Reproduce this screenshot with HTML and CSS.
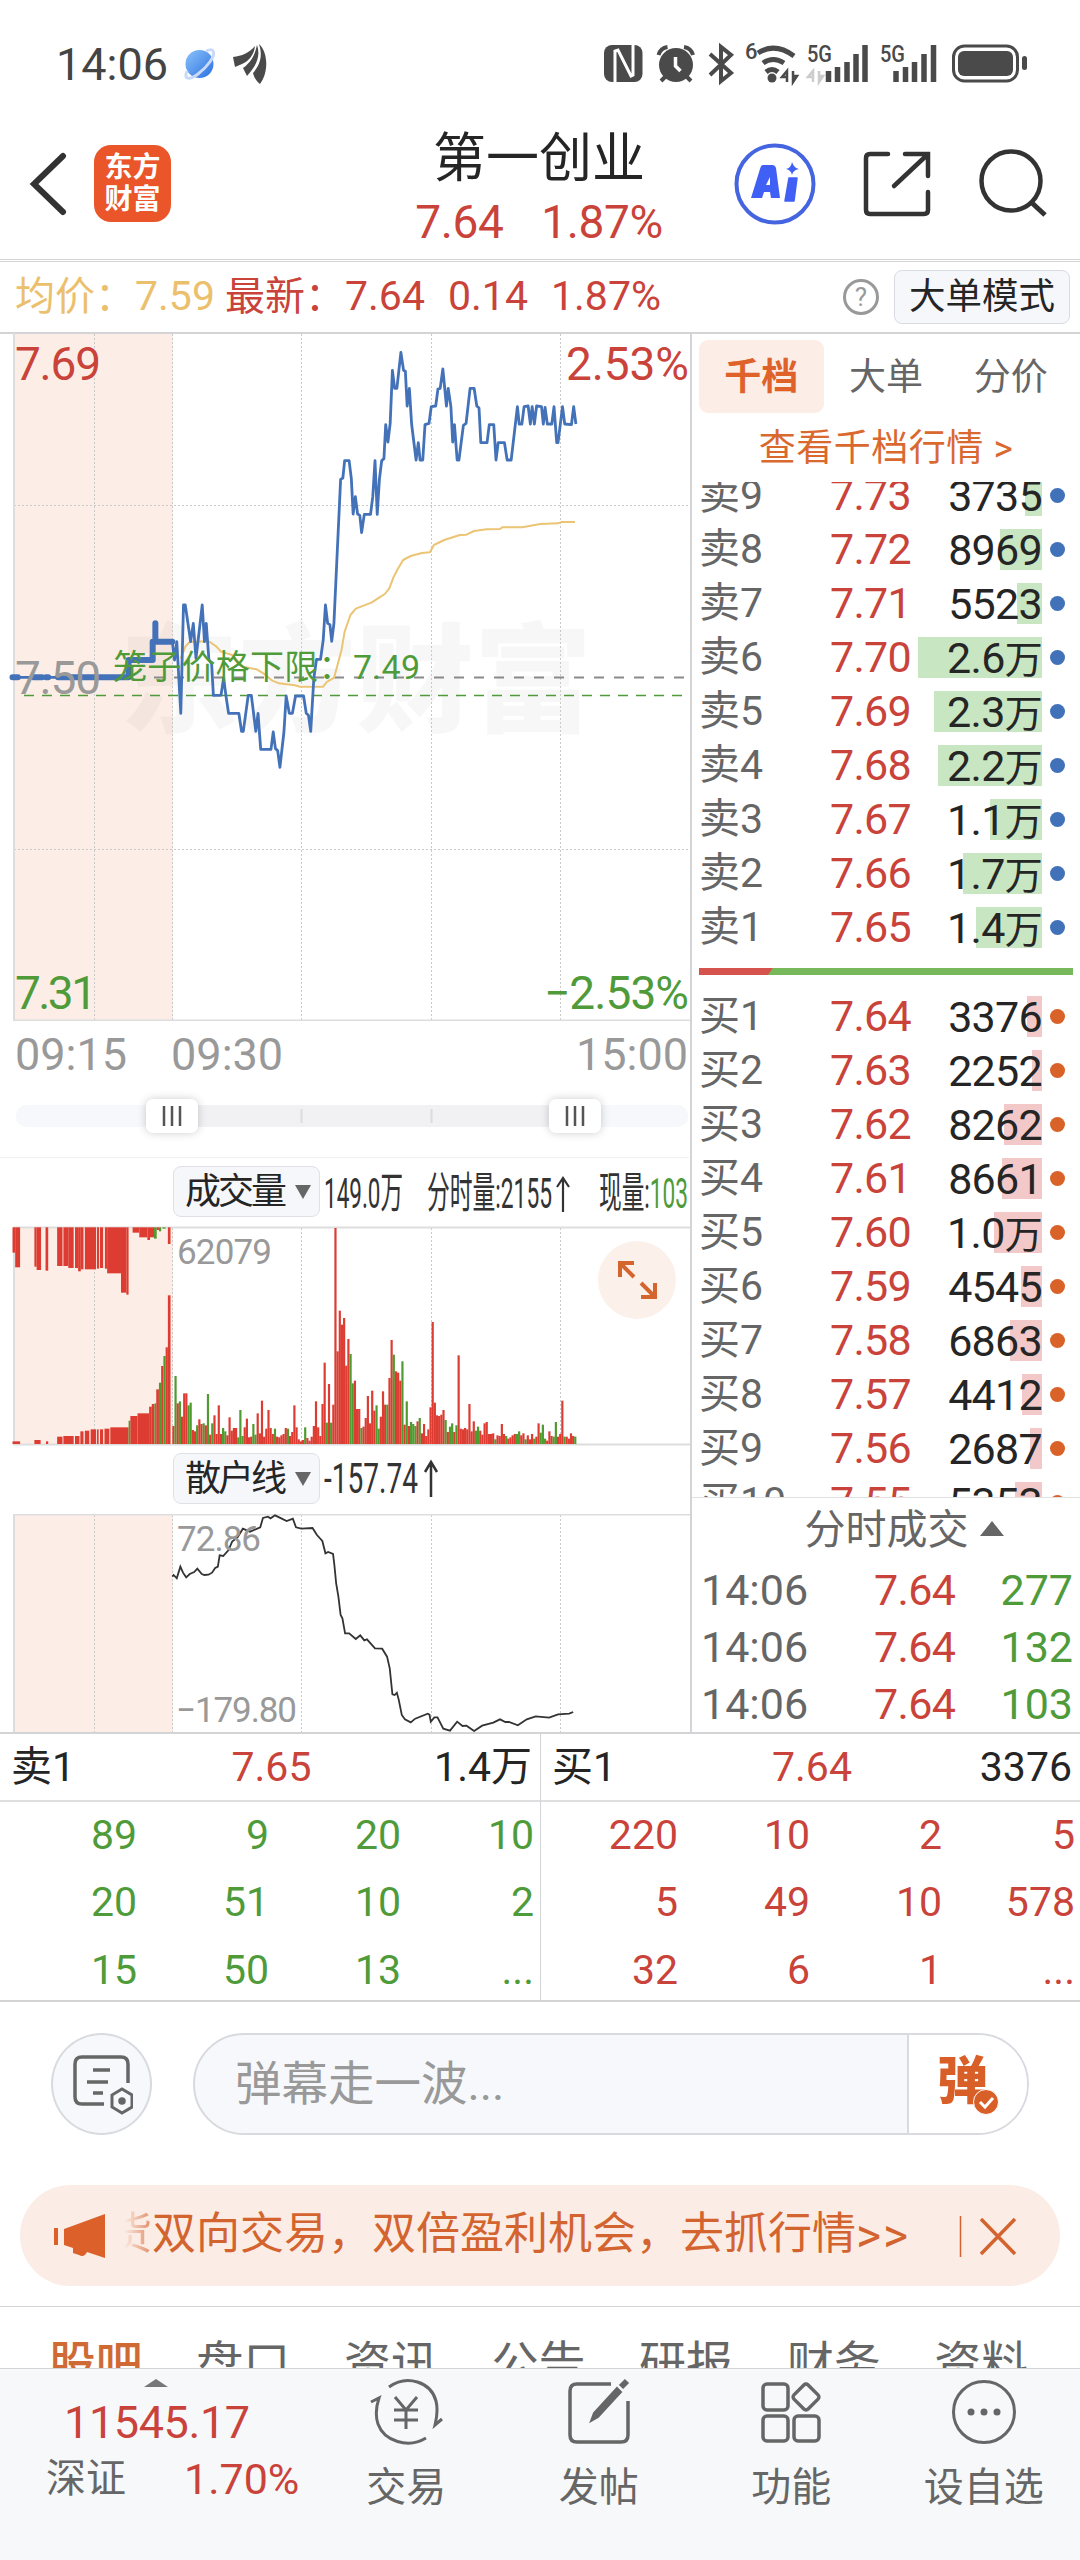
FILE: index.html
```html
<!DOCTYPE html>
<html lang="zh-CN">
<head>
    <meta charset="UTF-8">
    <meta name="viewport" content="width=device-width, initial-scale=1.0">
    <title>第一创业</title>
    <link rel="stylesheet" href="styles.css">
</head>
<body>
    <!-- status bar -->
    <div class="status">
        <span class="clock">14:06</span>
        <svg class="status-left" width="90" height="48" viewBox="180 40 90 48">
            <defs><linearGradient id="planet" x1="0" y1="0" x2="1" y2="1"><stop offset="0" stop-color="#8cc4fb"/><stop offset="1" stop-color="#2a6fe0"/></linearGradient></defs>
            <circle cx="199.500" cy="64" r="14" fill="url(#planet)"/>
            <path d="M187 71c-4 9 3 9 11 3 9-7 18-18 15-23-1-2-5-1-7 0" fill="none" stroke="#c9daf8" stroke-width="3"/>
            <path d="M259 44c9 8 10 28 1 40-4-3-6-7-7-11 7-8 10-17 6-29z" fill="#4a4a4a"/>
            <path d="M257 45c4 12-1 21-10 31l-4-8c8-6 12-13 14-23z" fill="#4a4a4a"/>
            <path d="M255 46c-1 9-6 15-13 18l-7 3-2-10c9-1 16-4 22-11z" fill="#4a4a4a"/>
        </svg>
        <svg class="status-right" width="430" height="48" viewBox="600 40 430 48">
            <rect x="604" y="45" width="38.500" height="37" rx="8" fill="#4a4a4a"/>
            <path d="M615 83V51l3-1 13 26 2-1V44" fill="none" stroke="#fff" stroke-width="3"/>
            <circle cx="676" cy="65" r="17" fill="#4a4a4a"/>
            <path d="M675.500 57v9l5 5" fill="none" stroke="#fff" stroke-width="3.500"/>
            <path d="M658.500 55q2-7 9-8M693 55q-2-7-9-8M665 77l-4 4M687 77l4 4" fill="none" stroke="#4a4a4a" stroke-width="4"/>
            <path d="M710 54l21 19-10 8V47l10 8-21 20" fill="none" stroke="#4a4a4a" stroke-width="4"/>
            <text x="745" y="59" font-size="22" textLength="11" class="st">6</text>
            <path d="M758 53q17-11 36 3M763 63q10-7 21 0M766 72q6-5 12 0" fill="none" stroke="#4a4a4a" stroke-width="5"/>
            <circle cx="772" cy="78" r="4.500" fill="#4a4a4a"/>
            <path d="M787 82V71l-5 6h5M793 71v11l4-6h-4" fill="none" stroke="#4a4a4a" stroke-width="2.500"/>
            <text x="807" y="62" font-size="23" textLength="25" lengthAdjust="spacingAndGlyphs" class="st">5G</text>
            <path d="M813 82V71l-5 6h5M819 71v11l4-6h-4" fill="none" stroke="#ccc" stroke-width="2.500"/>
            <path d="M828.500 71v11M837.500 67v15M847 62v20M856 54v28M865 45v37" stroke="#4a4a4a" stroke-width="5.500"/>
            <text x="880" y="62" font-size="23" textLength="25" lengthAdjust="spacingAndGlyphs" class="st">5G</text>
            <path d="M896 71v11M905.500 67v15M914.500 62v20M924 54v28M933.500 45v37" stroke="#4a4a4a" stroke-width="5.500"/>
            <rect x="953.500" y="46" width="64" height="35" rx="11" fill="none" stroke="#4a4a4a" stroke-width="3"/>
            <rect x="958" y="51" width="55" height="25" rx="6" fill="#4a4a4a"/>
            <rect x="1022" y="56" width="5" height="14" rx="2.500" fill="#4a4a4a"/>
        </svg>
    </div>

    <!-- header -->
    <div class="header">
        <svg class="back" width="40" height="64" viewBox="28 152 40 64"><path d="M63 156L34 184l29 28" fill="none" stroke="#333" stroke-width="6" stroke-linecap="round"/></svg>
        <div class="logo">东方<br>财富</div>
        <div class="title">
            <div class="name">第一创业</div>
            <div class="quote"><span>7.64</span><span>1.87%</span></div>
        </div>
        <svg class="tools" width="320" height="90" viewBox="730 139 320 90">
            <circle cx="775" cy="184" r="38.500" fill="none" stroke="#4565e0" stroke-width="4"/>
            <path d="M762 165h10q3 0 4 3l4 30h-9l-1-6h-6l-2 6h-11l9-29q1-4 3-4z" fill="#4060f5"/>
            <path d="M770 177v8h-4z" fill="#fff"/>
            <path d="M789 178h8l-3 23h-9z" fill="#4060f5" stroke="#4060f5" stroke-width="1.500" stroke-linejoin="round"/>
            <path d="M792 162q2 6 7 7-6 1-7 6-1-5-6-6 5-1 6-7z" fill="#4060f5"/>
            <path d="M888 154h-18q-4 0-4 4v52q0 4 4 4h54q4 0 4-4v-18M905 154h23v22M926 156l-32 30" fill="none" stroke="#333" stroke-width="4.500" stroke-linecap="round"/>
            <circle cx="1011" cy="181" r="29.500" fill="none" stroke="#333" stroke-width="4.500"/>
            <path d="M1031 202l14 13" stroke="#333" stroke-width="5"/>
        </svg>
    </div>

    <!-- quote line -->
    <div class="info">
        <span class="avg">均价：</span><span class="avg n1">7.59</span>
        <span class="n2">最新：</span><span class="n3">7.64</span><span class="n4">0.14</span><span class="n5">1.87%</span>
        <span class="help">?</span>
        <span class="mode">大单模式</span>
    </div>

    <div class="main">
        <div class="charts">
            <svg width="691" height="689" viewBox="0 332 691 689">
                <rect x="14" y="334" width="159" height="687" fill="#fceee6"/>
                <text x="120" y="723" font-size="118" textLength="472" class="mark">东方财富</text>
                <path class="grid" d="M94.5 334v687M172.5 334v687M301.500 334v687M431.500 334v687M560.500 334v687M14 505.500h676M14 849.500h676"/>
                <path class="axis" d="M14 333v687.500h676"/>
                <path d="M154 677.500h534" stroke="#8a8a8a" stroke-width="2" stroke-dasharray="10 10"/>
                <path d="M24 695.500h660" stroke="#4f9b3a" stroke-width="1.500" stroke-dasharray="10 8"/>
                <g transform="translate(0 330) scale(.44643 .33333)" fill="none" stroke-linejoin="round">
                    <path class="yellow" d="M405 985L415 950 425 936 460 934 470 936 485 950 495 965 520 975 545 1010 575 1018 590 1030 610 1052 625 1060 660 1066 672 1070 724 1070 732 1056 748 1044 755 1010 765 960 772 905 785 855 797 836 832 818 850 802 862 792 872 775 882 740 892 715 903 690 920 678 945 669 963 667 972 645 995 630 1030 615 1045 614 1062 603 1090 598 1120 597 1125 592 1170 592 1210 582 1250 580 1258 576 1288 576"/>
                    <path class="blue pre" d="M28 1042H40M74 1042H94M103 1042H108M130 1042H288V990H342V935H386M348 880V935"/>
                    <path class="blue" d="M28 1042H288M386 935L391 990 396 935 405 1150 411 825 415 825 427 935 433 880 439 985 453 825 458 935 462 880 468 990 474 1000 478 1096 495 1096 501 1044 506 1096 512 1150 535 1150 541 1204 545 1204 556 1096 563 1096 573 1204 578 1150 584 1258 607 1258 612 1206 617 1256 622 1262 627 1312 636 1206 641 1098 648 1150 655 1150 662 1098 680 1098 686 1150 691 1156 696 1204 703 1044 709 988 718 988 724 930 729 825 734 880 739 884 743 934 748 880 763 448 768 444 772 392 782 392 787 446 791 552 796 500 801 552 806 556 810 608 816 553 830 553 835 500 840 392 845 553 850 446 855 392 860 386 864 284 869 336 874 280 879 121 884 175 889 175 898 67 904 121 908 123 912 228 917 175 922 282 932 390 937 338 941 390 947 390 952 284 961 280 966 230 976 228 981 177 986 175 992 117 1000 228 1004 175 1010 230 1014 336 1018 284 1024 390 1028 390 1038 286 1044 280 1053 175 1062 175 1068 228 1073 234 1077 338 1091 338 1096 284 1106 284 1111 390 1116 338 1130 338 1136 390 1145 390 1159 230 1163 282 1169 282 1174 230 1183 228 1188 282 1192 230 1197 282 1202 228 1213 230 1217 282 1221 232 1226 282 1236 282 1241 230 1247 338 1250 338 1255 284 1260 230 1265 282 1280 284 1285 230 1290 282"/>
                </g>
                <g font-size="46">
                    <text x="15" y="380" class="red" textLength="86">7.69</text>
                    <text x="566" y="380" class="red" textLength="123">2.53%</text>
                    <text x="15" y="694" class="gray" textLength="86">7.50</text>
                    <text x="15" y="1009" class="green" textLength="82">7.31</text>
                    <text x="544" y="1009" class="green" textLength="145">−2.53%</text>
                </g>
                <text x="113" y="679" class="green" font-size="34" textLength="307">笼子价格下限：7.49</text>
            </svg>
            <div class="times"><span>09:15</span><span>09:30</span><span>15:00</span></div>
            <div class="slider">
                <svg width="691" height="56" viewBox="0 1088 691 56">
                    <rect x="16" y="1105" width="672" height="22" rx="10" fill="#f7f8fb"/>
                    <rect x="172" y="1105" width="403" height="22" fill="#f1f1f4"/>
                    <path d="M301.500 1109v14M431.500 1109v14" stroke="#dcdcde" stroke-width="2"/>
                    <g class="knob">
                        <rect x="146" y="1099" width="52" height="34" rx="7"/><rect x="549" y="1099" width="52" height="34" rx="7"/>
                    </g>
                    <path d="M164 1106v20M172 1106v20M180 1106v20M567 1106v20M575 1106v20M583 1106v20" stroke="#555" stroke-width="2.500"/>
                </svg>
            </div>
            <div class="indicator">
                <span class="pick">成交量<i></i></span>
                <svg width="368" height="52" viewBox="323 1166 368 52" font-size="43" fill="#333">
                    <text x="325" y="1208" textLength="79" lengthAdjust="spacingAndGlyphs">149.0万</text>
                    <text x="428" y="1208" textLength="125" lengthAdjust="spacingAndGlyphs">分时量:2155</text>
                    <path d="M564 1178v34M558 1187l6-9 6 9" fill="none" stroke="#333" stroke-width="2.200"/>
                    <text x="600" y="1208" textLength="89" lengthAdjust="spacingAndGlyphs">现量:<tspan class="green">103</tspan></text>
                </svg>
            </div>
            <svg width="691" height="220" viewBox="0 1226 691 220">
                <rect x="14" y="1227" width="159" height="217" fill="#fceee6"/>
                <path class="grid" d="M94.500 1228v216M172.500 1228v216M301.500 1228v216M431.500 1228v216M560.500 1228v216"/>
                <path class="axis" d="M690 1227.500H14V1444.500H690"/>
                <g id="volume" transform="translate(0 1150) scale(.44643 .33333)"></g>
                <text x="177" y="1264" class="gray" font-size="35" textLength="95">62079</text>
                <circle cx="637" cy="1280" r="39" fill="#fbf1ea"/>
                <path d="M620 1277v-14h14M621 1264l13 13M655 1283v14h-14M654 1296l-13-13" fill="none" stroke="#d5652f" stroke-width="4"/>
            </svg>
            <div class="indicator second">
                <span class="pick">散户线<i></i></span>
                <svg width="368" height="52" viewBox="323 1453 368 52" font-size="43" fill="#333">
                    <text x="325" y="1493" textLength="94" lengthAdjust="spacingAndGlyphs">-157.74</text>
                    <path d="M432 1462v35M426 1472l6-10 6 10" fill="none" stroke="#333" stroke-width="2.500"/>
                </svg>
            </div>
            <svg width="691" height="218" viewBox="0 1514 691 218">
                <rect x="14" y="1514" width="159" height="218" fill="#fceee6"/>
                <path class="grid" d="M94.500 1515v217M172.500 1515v217M301.500 1515v217M431.500 1515v217M560.500 1515v217"/>
                <path class="axis" d="M690 1514.500H14V1732"/>
                <path transform="translate(0 1440) scale(.44643 .33333)" class="retail" d="M386 410L389 405 396 415 404 380 410 398 417 412 425 402 435 396 442 386 452 402 458 405 467 404 475 398 482 384 488 380 492 346 500 348 512 330 520 305 532 292 544 266 560 275 583 262 589 234 600 230 606 235 616 226 630 235 642 243 652 238 656 236 663 262 675 266 700 264 710 285 722 303 729 340 735 336 746 342 749 375 753 430 758 470 763 525 767 535 773 580 782 580 797 597 807 586 816 601 822 598 840 625 856 626 867 650 873 685 879 763 884 765 889 758 893 778 900 825 907 838 920 847 930 836 958 821 962 824 965 845 973 832 980 832 993 866 1008 872 1024 845 1036 858 1045 857 1062 873 1080 857 1105 848 1120 838 1132 846 1140 846 1160 856 1180 838 1200 829 1230 833 1250 823 1275 821 1284 816"/>
                <g class="gray" font-size="35">
                    <text x="177" y="1551" textLength="84">72.86</text>
                    <text x="176" y="1722" textLength="121">−179.80</text>
                </g>
            </svg>
        </div>

        <!-- order book -->
        <div class="book">
            <div class="book-tabs"><span class="on">千档</span><span>大单</span><span>分价</span></div>
            <div class="more">查看千档行情 &gt;</div>
            <div class="depth">
                <div id="asks"></div>
                <div class="ratio"></div>
                <div id="bids"></div>
            </div>
            <div class="deals-title">分时成交<i></i></div>
            <div class="deal"><span>14:06</span><b>7.64</b><em>277</em></div>
            <div class="deal"><span>14:06</span><b>7.64</b><em>132</em></div>
            <div class="deal"><span>14:06</span><b>7.64</b><em>103</em></div>
        </div>
    </div>

    <!-- queue at first level -->
    <div class="queue">
        <div class="side">
            <div class="side-top"><span>卖1</span><b>7.65</b><span>1.4万</span></div>
            <div class="cells green">
                <span>89</span><span>9</span><span>20</span><span>10</span>
                <span>20</span><span>51</span><span>10</span><span>2</span>
                <span>15</span><span>50</span><span>13</span><span>...</span>
            </div>
        </div>
        <div class="side">
            <div class="side-top"><span>买1</span><b>7.64</b><span>3376</span></div>
            <div class="cells red">
                <span>220</span><span>10</span><span>2</span><span>5</span>
                <span>5</span><span>49</span><span>10</span><span>578</span>
                <span>32</span><span>6</span><span>1</span><span>...</span>
            </div>
        </div>
    </div>

    <!-- comments -->
    <div class="comment">
        <div class="round">
            <svg width="62" height="60" viewBox="71 2055 62 60" fill="none" stroke="#666" stroke-width="3.500">
                <path d="M104 2104H82q-7 0-7-7v-33q0-7 7-7h39q7 0 7 7v19M93 2070h17M87 2082h21M93 2093h10"/>
                <path d="M122 2089l10 6v12l-10 6-10-6v-12z" stroke-width="3"/><circle cx="122" cy="2101" r="2" fill="#666"/>
            </svg>
        </div>
        <div class="input">
            <span class="hint">弹幕走一波...</span>
            <span class="send">弹<svg width="26" height="26" viewBox="0 0 26 26"><circle cx="13" cy="13" r="12.500" fill="#d95f28" stroke="#fff"/><path d="M7 13l5 5 8-9" fill="none" stroke="#fff" stroke-width="3"/></svg></span>
        </div>
    </div>

    <div class="banner">
        <svg width="54" height="46" viewBox="53 2213 54 46" fill="#dc602a"><path d="M54 2228h4v17h-4zM64 2229l41-15v44l-18-6q-3 6-8 3l-6-2v-5l-9-3z"/></svg>
        <div class="scroll"><span class="fade">货</span>双向交易，双倍盈利机会，去抓行情<span class="arrows">&gt;&gt;</span></div>
        <svg class="close" width="60" height="44" viewBox="958 2213 60 44" fill="none" stroke="#d4642f"><path d="M960.500 2215v41" stroke-width="1.500"/><path d="M981 2218l34 35M1015 2218l-34 35" stroke-width="3.500"/></svg>
    </div>

    <div class="tabs"><span class="on">股吧</span><span>盘口</span><span>资讯</span><span>公告</span><span>研报</span><span>财务</span><span>资料</span></div>

    <div class="nav">
        <div class="index">
            <i></i>
            <div class="points">11545.17</div>
            <div class="idx"><span>深证</span><b>1.70%</b></div>
        </div>
        <div class="item">
            <svg width="76" height="68" viewBox="368 2377 76 68" fill="none" stroke="#666" stroke-width="3">
                <path d="M389 2386c18-13 42-5 47 14 2 8 1 16-1 24l7-6M426 2437c-18 11-42 3-48-14-3-9-2-17 1-26l-8 4"/>
                <path d="M395 2396l11 13 11-13M406 2409v19M394 2409h24M394 2419h24"/>
            </svg>交易</div>
        <div class="item">
            <svg width="76" height="68" viewBox="561 2377 76 68" fill="none" stroke="#666" stroke-width="3.500">
                <path d="M611 2383h-34q-7 0-7 7v44q0 7 7 7h44q7 0 7-7v-34"/>
                <path d="M591 2420l3-8 23-25 4 4-23 25z" fill="#666" stroke-width="2"/><path d="M621 2386l6-6" stroke-width="6"/>
            </svg>发帖</div>
        <div class="item">
            <svg width="76" height="68" viewBox="753 2377 76 68" fill="none" stroke="#666" stroke-width="3.500">
                <rect x="763" y="2383" width="25" height="26" rx="4"/><rect x="763" y="2415" width="25" height="25" rx="4"/><rect x="794" y="2415" width="25" height="25" rx="4"/>
                <rect x="796" y="2386" width="20" height="20" rx="3" transform="rotate(45 806 2396)"/>
            </svg>功能</div>
        <div class="item">
            <svg width="76" height="68" viewBox="945 2377 76 68" fill="#666">
                <circle cx="983" cy="2411" r="30.500" fill="none" stroke="#666" stroke-width="3"/>
                <circle cx="970" cy="2411" r="3.500"/><circle cx="983" cy="2411" r="3.500"/><circle cx="996" cy="2411" r="3.500"/>
            </svg>设自选</div>
    </div>

    <script>
        // name, price, volume, bar width
        const asks = [
            ["卖9", "7.73", "3735", 17], ["卖8", "7.72", "8969", 42], ["卖7", "7.71", "5523", 25],
            ["卖6", "7.70", "2.6万", 124], ["卖5", "7.69", "2.3万", 108], ["卖4", "7.68", "2.2万", 104],
            ["卖3", "7.67", "1.1万", 52], ["卖2", "7.66", "1.7万", 79], ["卖1", "7.65", "1.4万", 66]
        ];
        const bids = [
            ["买1", "7.64", "3376", 15], ["买2", "7.63", "2252", 10], ["买3", "7.62", "8262", 38],
            ["买4", "7.61", "8661", 40], ["买5", "7.60", "1.0万", 48], ["买6", "7.59", "4545", 21],
            ["买7", "7.58", "6863", 32], ["买8", "7.57", "4412", 20], ["买9", "7.56", "2687", 12],
            ["买10", "7.55", "5353", 27]
        ];
        function fill(id, list) {
            document.getElementById(id).innerHTML = list.map(r =>
                `<div class="row"><span>${r[0]}</span><b>${r[1]}</b><em><u style="width:${r[3]}px"></u>${r[2].replace("万", "<small>万</small>")}</em><i></i></div>`).join("");
        }
        fill("asks", asks);
        fill("bids", bids);

        // volume per minute, g = down
        const vol = "r54 g204 r122 g128 r82 r152 r152 g116 g124 r42 r38 g56 r74 r60 g62 r56 g150 r28 g62 r86 r30 r116 r30 g48 g38 r26 r80 r40 r48 r48 g20 g102 g24 r50 r76 r20 r22 g60 g28 r92 r32 r130 r22 r46 r102 r48 r30 g46 r22 r20 r26 r30 r48 g46 r24 r36 r116 r50 r14 r8 r12 g50 r18 r10 r22 r54 r128 r50 r24 r120 r244 g64 r180 g64 r118 r648 r278 r400 r358 r378 r235 r315 g270 g182 r190 r105 r105 g48 r52 r78 r144 r62 r160 r100 g116 g46 r82 r158 r118 g118 r198 r312 g268 r218 r214 r190 g248 r58 g128 r54 g66 g60 g54 r68 g78 r32 r60 r24 r44 r110 r366 r124 r86 r84 r88 r102 g72 r36 g52 g62 r36 g56 r266 r46 r44 r48 r44 r120 r38 r68 g40 g52 r40 r28 r62 r66 r30 r30 r32 g14 r26 r24 r60 r30 g24 r16 r20 r26 r30 g30 g38 r26 r32 g14 r26 r14 r30 g16 r22 r62 g34 g58 g16 r10 r38 r24 g22 g66 r22 r30 r130 g22 r22 r16 r32 r24 g22".split(" ");
        // call auction bars: from, to, height
        const low = [[28,45,8],[77,91,12],[103,108,8],[128,140,22],[142,165,24],[168,178,24],[180,187,38],[190,200,40],[203,215,44],[217,221,44],[224,231,44],[234,245,46],[247,288,50],[288,292,70,"g"],[292,308,84],[308,334,92],[334,340,112],[340,346,120],[346,350,122,"g"],[350,356,164],[356,361,184,"g"],[361,366,234],[366,371,264,"g"],[371,376,290],[376,382,446]];
        const high = [[28,34,76],[34,45,120],[77,82,118],[82,92,128],[102,108,130],[128,140,116],[142,153,116],[153,165,122],[168,175,122],[175,181,132],[181,187,126],[190,215,126],[217,222,124],[224,231,122],[235,240,124],[240,271,138],[271,283,196],[283,288,202],[297,312,16],[312,330,30],[330,336,38],[336,345,30],[345,351,34,"g"],[351,356,8],[356,361,12,"g"],[364,371,4,"g"],[376,382,50]];
        const bar = (x, y, w, h, c) => `<rect x="${x}" y="${y}" width="${w}" height="${h}" class="${c || "r"}"/>`;
        let bars = "";
        vol.forEach((v, i) => bars += bar((386 + 4.84 * i).toFixed(1), 882 - v.slice(1), 4.9, +v.slice(1), v[0]));
        low.forEach(b => bars += bar(b[0], 882 - b[2], b[1] - b[0], b[2], b[3]));
        high.forEach(b => bars += bar(b[0], 232, b[1] - b[0], b[2], b[3]));
        document.getElementById("volume").innerHTML = bars;
    </script>
</body>
</html>
```
FILE: styles.css
```css
:root{
    --red: #c9433a;
    --green: #4f9b3a;
    --orange: #d5652f;
    --line: #d4d4d6;
    --text: #252525;
    --gray: #666;
}
*{
    box-sizing: border-box;
}
body{
    margin: 0;
    width: 1080px;
    height: 2560px;
    overflow: hidden;
    background: #fff;
    color: var(--text);
    font-family: Roboto, "Noto Sans CJK SC", sans-serif;
    font-size: 41px;
    line-height: 1;
    white-space: nowrap;
}
svg{
    display: block;
    flex: none;
}
b, em, i, u{
    font-weight: 400;
    font-style: normal;
    text-decoration: none;
}
.red{
    color: var(--red);
    fill: var(--red);
}
.green{
    color: var(--green);
    fill: var(--green);
}
.gray{
    fill: #999;
}
.status{
    height: 88px;
    padding: 40px 50px 0 56px;
    display: flex;
    align-items: center;
    color: #444;
    font-size: 45px;
}
.clock{
    width: 124px;
}
.status-right{
    margin-left: auto;
}
.st{
    fill: #4a4a4a;
    font-weight: 500;
}
.header{
    height: 172px;
    padding: 40px 30px 0 28px;
    display: flex;
    align-items: flex-start;
    border-bottom: 1px solid var(--line);
}
.back{
    margin-top: 24px;
}
.logo{
    width: 77px;
    height: 77px;
    margin: 17px 0 0 26px;
    padding-top: 7px;
    border-radius: 17px;
    background: #ea552a;
    color: #fff;
    text-align: center;
    font-size: 28px;
    line-height: 32px;
    font-weight: 700;
}
.title{
    width: 300px;
    margin-left: 218px;
    padding-top: 1px;
    text-align: center;
}
.name{
    font-size: 53px;
    line-height: 60px;
}
.quote{
    display: flex;
    justify-content: center;
    gap: 38px;
    padding-top: 10px;
    color: var(--red);
    font-size: 46px;
    line-height: 47px;
    letter-spacing: -0.4px;
}
.tools{
    margin: 11px 0 0 41px;
}
.info{
    height: 73px;
    margin-top: 1px;
    padding: 0 10px 1px 15px;
    border-top: 1px solid var(--line);
    border-bottom: 2px solid var(--line);
    display: flex;
    align-items: center;
    color: var(--red);
}
.avg{
    color: #ebc06d;
}
.info .avg, .n2{
    font-size: 40px;
}
.info .n1{
    font-size: 41px;
    width: 90px;
}
.n2{
    width: 120px;
}
.n3, .n4{
    width: 103px;
}
.help{
    width: 36px;
    height: 36px;
    margin-left: auto;
    border: 3px solid #999;
    border-radius: 50%;
    color: #999;
    font-size: 26px;
    line-height: 30px;
    text-align: center;
}
.mode{
    width: 176px;
    height: 54px;
    margin-left: 15px;
    border: 1px solid #d9dbe2;
    border-radius: 8px;
    background: #f6f7fb;
    color: var(--text);
    font-size: 36.5px;
    line-height: 52px;
    text-align: center;
}
.main{
    display: flex;
    height: 1402px;
    margin-top: -2px;
    border-bottom: 2px solid var(--line);
}
.charts{
    width: 692px;
    border-right: 2px solid var(--line);
}
.grid{
    fill: none;
    stroke: #c9c9c9;
    stroke-width: 1;
    stroke-dasharray: 2 2;
}
.axis{
    fill: none;
    stroke: #ddd;
    stroke-width: 2;
}
.mark{
    fill: #000;
    fill-opacity: .03;
    font-weight: 900;
}
.blue, .yellow, .retail{
    fill: none;
    vector-effect: non-scaling-stroke;
}
.blue{
    stroke: #4472b8;
    stroke-width: 2.8;
}
.blue.pre{
    stroke-width: 6;
    stroke-linecap: round;
}
.yellow{
    stroke: #ebc474;
    stroke-width: 2;
}
.retail{
    stroke: #333;
    stroke-width: 1.8;
}
.times{
    height: 67px;
    padding: 11px 2px 0 15px;
    display: flex;
    color: #999;
    font-size: 45px;
}
.times span:nth-child(2){
    margin-left: 44px;
}
.times span:last-child{
    margin-left: auto;
}
.slider{
    height: 70px;
    margin-right: 1px;
    border-bottom: 1px solid #f1f1f3;
}
.knob{
    fill: #fff;
    filter: drop-shadow(0 0 4px rgba(0,0,0,.2));
}
.indicator{
    height: 68px;
    padding: 8px 0 0 173px;
    display: flex;
}
.second{
    padding-top: 7px;
}
.pick{
    width: 148px;
    height: 51px;
    margin-right: 2px;
    padding-left: 11px;
    border: 1px solid #dfe1e6;
    border-radius: 8px;
    background: #f6f7fa;
    display: flex;
    align-items: center;
    font-size: 36px;
    letter-spacing: -3px;
}
.pick i{
    margin-left: 11px;
    border: 8px solid transparent;
    border-top: 14px solid #666;
    border-bottom: 0;
}
.r{
    fill: #dc3c32;
}
.g{
    fill: #4f9b2f;
}
.book{
    width: 388px;
    padding: 8px 7px 0;
}
.book-tabs{
    display: flex;
    height: 73px;
    color: var(--gray);
    font-size: 37px;
    line-height: 75px;
    text-align: center;
}
.book-tabs span{
    flex: 1;
}
.book-tabs .on{
    border-radius: 9px;
    background: #fceee6;
    color: #e0622b;
    font-weight: 700;
}
.more{
    height: 69px;
    padding-top: 17px;
    color: #d9692f;
    font-size: 37px;
    letter-spacing: .5px;
    text-align: center;
}
.depth{
    height: 1015px;
    margin-right: -7px;
    overflow: hidden;
    font-size: 43px;
}
#asks{
    margin-top: -14px;
}
.row{
    display: flex;
    align-items: center;
    height: 54px;
    color: var(--gray);
}
.row span{
    flex: none;
    width: 131px;
    font-size: 41px;
}
.row b{
    width: 80px;
    color: var(--red);
    letter-spacing: -0.7px;
}
.row em{
    position: relative;
    width: 132px;
    height: 41px;
    margin-right: 8px;
    color: var(--text);
    line-height: 43px;
    letter-spacing: -0.7px;
    text-align: right;
    isolation: isolate;
}
.row small{
    font-size: 38px;
}
.row u{
    position: absolute;
    z-index: -1;
    right: 0;
    top: 0;
    height: 41px;
    background: #c8e6c1;
}
.row i{
    width: 15px;
    height: 15px;
    border-radius: 50%;
    background: #4171b9;
}
#bids u{
    background: #f2c9c8;
}
#bids i{
    background: #d96228;
}
.ratio{
    width: 374px;
    height: 7px;
    margin: 14px 0;
    background: linear-gradient(125deg, #d6524c 60px, #76b85a 61px);
}
.deals-title{
    display: flex;
    align-items: center;
    justify-content: center;
    height: 65px;
    margin: 0 -7px;
    border-top: 1px solid #e2e2e2;
    padding-left: 36px;
    color: var(--gray);
    font-size: 41px;
}
.deals-title i{
    margin: 0 0 4px 11px;
    border: 12px solid transparent;
    border-bottom: 15px solid #666;
    border-top: 0;
}
.deal{
    display: flex;
    align-items: center;
    height: 57px;
    color: var(--gray);
    font-size: 43px;
}
.deal span{
    width: 175px;
    padding-left: 2px;
}
.deal b{
    color: var(--red);
    letter-spacing: -0.6px;
}
.deal em{
    margin-left: auto;
    color: var(--green);
}
.queue{
    display: flex;
    height: 268px;
    border-bottom: 2px solid var(--line);
}
.side{
    width: 540px;
}
.side + .side{
    border-left: 1px solid var(--line);
}
.side-top{
    display: grid;
    grid-template-columns: 1fr 1fr 1fr;
    align-items: center;
    height: 68px;
    padding: 0 8px 0 11px;
    border-bottom: 2px solid #dfdfe1;
}
.side-top b{
    color: var(--red);
    text-align: center;
}
.side-top span:last-child{
    text-align: right;
}
.cells{
    display: grid;
    grid-template-columns: 137px 132px 132px 133px;
    grid-auto-rows: 67.3px;
    align-items: center;
    text-align: right;
}
.comment{
    display: flex;
    gap: 41px;
    padding: 31px 51px 0;
}
.round{
    width: 101px;
    height: 102px;
    border: 2px solid #d8dae0;
    border-radius: 50%;
    background: #f7f8fb;
    padding: 20px 0 0 18px;
}
.input{
    width: 836px;
    height: 102px;
    border: 2px solid #d8dae0;
    border-radius: 51px;
    background: #f7f8fb;
    display: flex;
    overflow: hidden;
}
.hint{
    flex: 1;
    padding-left: 40px;
    color: #999;
    font-size: 46.5px;
    line-height: 99px;
}
.send{
    position: relative;
    width: 120px;
    padding-left: 28px;
    border-left: 2px solid #d8dae0;
    background: #fff;
    color: #d95f28;
    font-size: 51px;
    font-weight: 900;
    line-height: 94px;
}
.send svg{
    position: absolute;
    left: 64px;
    top: 54px;
}
.banner{
    display: flex;
    align-items: center;
    width: 1040px;
    height: 101px;
    margin: 50px 20px 0;
    padding-left: 33px;
    border-radius: 51px;
    background: #fbede5;
    color: #d4642f;
    font-size: 44px;
}
.scroll{
    display: flex;
    width: 792px;
    margin-left: 17px;
}
.arrows{
    font-size: 48px;
    letter-spacing: 2px;
}
.fade{
    width: 28px;
    direction: rtl;
    overflow: hidden;
    line-height: 54px;
    margin: -5px 0;
    -webkit-mask-image: linear-gradient(to right, transparent, rgba(0,0,0,.7));
    mask-image: linear-gradient(to right, transparent, rgba(0,0,0,.7));
}
.close{
    margin-left: 42px;
}
.tabs{
    display: flex;
    height: 62px;
    margin-top: 20px;
    padding: 33px 25px 0 22px;
    border-top: 1px solid var(--line);
    overflow: hidden;
    color: var(--gray);
    font-size: 47px;
}
.tabs span{
    flex: 1;
    text-align: center;
}
.tabs .on{
    color: #cf6a35;
    font-weight: 500;
}
.nav{
    position: relative;
    display: flex;
    height: 193px;
    border-top: 1px solid var(--line);
    background: #f7f8fa;
    color: var(--gray);
    font-size: 40px;
}
.index{
    width: 310px;
    padding-top: 10px;
}
.index i{
    display: block;
    width: 0;
    margin-left: 144px;
    border: 12px solid transparent;
    border-bottom: 8px solid #777;
    border-top: 0;
}
.points{
    padding: 12px 0 0 64px;
    color: var(--red);
    font-size: 45px;
    line-height: 48px;
    letter-spacing: -0.4px;
}
.idx{
    display: flex;
    gap: 58px;
    padding: 9px 0 0 46px;
    line-height: 46px;
}
.idx b{
    color: var(--red);
    font-size: 43px;
}
.item{
    flex: 1;
    padding-top: 9px;
    display: flex;
    flex-direction: column;
    align-items: center;
    line-height: 84px;
}
```
